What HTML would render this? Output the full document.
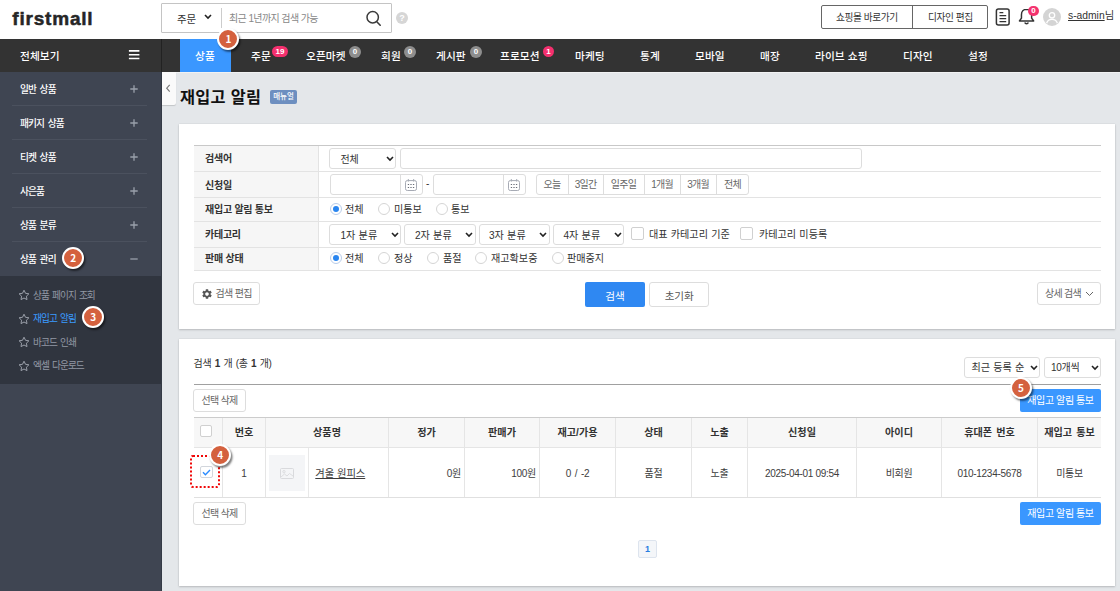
<!DOCTYPE html>
<html lang="ko">
<head>
<meta charset="utf-8">
<title>재입고 알림</title>
<style>
*{box-sizing:border-box;margin:0;padding:0}
html,body{width:1120px;height:591px;overflow:hidden;background:#e4e7ea}
body{position:relative;font-family:"Liberation Sans","Noto Sans CJK KR",sans-serif;font-size:10px;color:#333;line-height:1}
.a{position:absolute}
.t{position:absolute;white-space:nowrap;line-height:14px;height:14px;letter-spacing:-.250px}
.b{font-weight:700}
.c{text-align:center}
/* header */
#hd{left:0;top:0;width:1120px;height:39px;background:#fff}
#nav{left:0;top:39px;width:1120px;height:33px;background:#333}
#side{left:0;top:72px;width:161px;height:519px;background:#3f4552}
#sub{left:0;top:276px;width:161px;height:108px;background:#30353f}
.sl{position:absolute;left:12px;width:135px;height:1px;background:#4b515e}
.sm{color:#fff;font-size:9.700px;font-weight:500;margin-top:.500px;left:20px;letter-spacing:-.850px;word-spacing:1.600px}
.pl{position:absolute;left:130px;width:7px;height:7px;margin-top:1px}
.pl:before{content:"";position:absolute;left:0;top:3px;width:7px;height:1px;background:#8d929c}
.pl:after{content:"";position:absolute;left:3px;top:0;width:1px;height:7px;background:#8d929c}
.ss{color:#9298a4;font-size:9.700px;left:33px;letter-spacing:-.950px;word-spacing:1.300px}
.nv{color:#fff;font-size:10.700px;font-weight:500;top:48px;line-height:16px;height:16px;letter-spacing:.100px}
.bd{position:absolute;height:11px;border-radius:6px;color:#fff;font-size:8px;font-weight:700;text-align:center;line-height:11px;font-family:"Liberation Sans",sans-serif}
.num{position:absolute;width:22px;height:22px;border-radius:50%;background:#d4613e;border:2px solid #fff;box-shadow:1.500px 2px 2px rgba(0,0,0,.5);color:#fff;font-size:10px;font-weight:700;text-align:center;line-height:17.500px;font-family:"Noto Sans CJK KR",sans-serif}

.pn{position:absolute;left:179px;width:936px;background:#fff;box-shadow:0 1px 2px rgba(0,0,0,.18),0 0 1.500px rgba(0,0,0,.1)}
.rl{position:absolute;left:194px;width:907px;height:1px;background:#e3e3e3}
.lb{left:205px;font-weight:700;color:#333}
.bx{position:absolute;background:#fff;border:1px solid #ddd;border-radius:3px}
.cv{position:absolute}
.g{color:#666;letter-spacing:-.750px}
.f{font-size:10.100px;letter-spacing:0;word-spacing:.400px}
.rd{position:absolute;width:12px;height:12px;border-radius:50%;border:1px solid #d5d5d5;background:#fff}
.rd.on{border-color:#b9cdea}
.rd.on:after{content:"";position:absolute;left:2px;top:2px;width:6px;height:6px;border-radius:50%;background:#2a86f0}
.ck{position:absolute;width:12px;height:12px;border:1px solid #d0d0d0;border-radius:2px;background:#fff}
.vl{position:absolute;top:418px;width:1px;height:79px;background:#e5e5e5}
.th{top:426px;font-weight:700;text-align:center;color:#333;font-size:10.100px;letter-spacing:0;word-spacing:1.200px}
.td{top:467px;color:#3d3d3d;letter-spacing:-.300px}
</style>
</head>
<body>
<!-- ===== header ===== -->
<div id="hd" class="a"></div>
<div class="t" style="left:12.300px;top:6px;font-size:19px;line-height:26px;height:26px;font-weight:700;color:#262626;-webkit-text-stroke:.500px #262626;letter-spacing:.800px;font-family:'Liberation Sans',sans-serif">firstmall</div>
<div class="a" style="left:161px;top:3px;width:231px;height:30px;border:1px solid #c4c4c4;border-radius:1px;background:#fff"></div>
<div class="a" style="left:221px;top:8px;width:1px;height:20px;background:#ccc"></div>
<div class="t" style="left:177px;top:11.500px;font-size:10.500px;color:#333">주문</div>
<svg class="a" style="left:204px;top:14px" width="8" height="6" viewBox="0 0 8 6"><path d="M1 1l3 3 3-3" fill="none" stroke="#222" stroke-width="1.6"/></svg>
<div class="t" style="left:229px;top:11.500px;font-size:10px;letter-spacing:-.600px;color:#888">최근 1년까지 검색 가능</div>
<svg class="a" style="left:365px;top:10px" width="18" height="18" viewBox="0 0 18 18"><circle cx="7.700" cy="7.300" r="5.700" fill="none" stroke="#3a3a3a" stroke-width="1.500"/><path d="M11.800 11.800l3.400 3.400" stroke="#3a3a3a" stroke-width="1.600" stroke-linecap="round"/></svg>
<div class="a c" style="left:396px;top:12px;width:12px;height:12px;border-radius:50%;background:#d6d6d6;color:#fff;font-size:9px;line-height:12px;font-weight:700;font-family:'Liberation Sans',sans-serif">?</div>

<div class="a" style="left:821px;top:5px;width:167px;height:24px;border:1px solid #666;border-radius:2px;background:#fff"></div>
<div class="a" style="left:912px;top:5px;width:1px;height:24px;background:#666"></div>
<div class="t" style="left:836px;top:11.300px;font-size:9.700px;letter-spacing:-.400px;color:#333">쇼핑몰 바로가기</div>
<div class="t" style="left:928px;top:11.300px;font-size:9.700px;letter-spacing:-.400px;color:#333">디자인 편집</div>
<svg class="a" style="left:994px;top:8px" width="17" height="18" viewBox="0 0 17 18"><rect x="2.400" y="1.100" width="12.700" height="15.900" rx="2" fill="none" stroke="#333" stroke-width="1.500"/><path d="M5.500 4.600h3.800M5.500 7.600h6.700M5.500 10.600h6.700M5.500 13.600h6.700" stroke="#333" stroke-width="1.300"/></svg>
<svg class="a" style="left:1017.200px;top:7.300px" width="19.100" height="19.100" viewBox="0 0 18 18"><path d="M9 2.2c-3 0-4.8 2.2-4.8 5v3.3L2.3 13.2h13.4l-1.9-2.7V7.2c0-2.8-1.8-5-4.8-5z" fill="none" stroke="#333" stroke-width="1.4" stroke-linejoin="round"/><path d="M7.3 14.6a1.8 1.8 0 0 0 3.4 0" fill="none" stroke="#333" stroke-width="1.3"/></svg>
<div class="bd" style="left:1028.300px;top:5.800px;width:10.500px;height:10.500px;line-height:10.500px;background:#f4336f">0</div>
<svg class="a" style="left:1043px;top:8px" width="18" height="18" viewBox="0 0 18 18"><circle cx="9" cy="9" r="9" fill="#d4d4d4"/><circle cx="9" cy="7.3" r="2.7" fill="none" stroke="#fff" stroke-width="1.3"/><path d="M3.6 15.2c.8-2.6 2.9-3.8 5.4-3.8s4.600 1.200 5.400 3.800" fill="none" stroke="#fff" stroke-width="1.3"/></svg>
<div class="t" style="left:1068px;top:9px;font-size:10.300px;letter-spacing:0;color:#333"><span style="text-decoration:underline">s-admin</span>님</div>

<!-- ===== nav ===== -->
<div id="nav" class="a"></div>
<div class="a" style="left:161px;top:39px;width:1px;height:33px;background:#222"></div>
<div class="a" style="left:180px;top:39px;width:51px;height:33px;background:#3a97ff"></div>
<div class="t nv" style="left:20px">전체보기</div>
<svg class="a" style="left:128px;top:48px" width="12" height="13" viewBox="0 0 12 13"><path d="M.900 2.900h10.500M.900 6.700h10.500M.900 10.500h10.500" stroke="#fff" stroke-width="1.600"/></svg>
<div class="t nv" style="left:195px">상품</div>
<div class="t nv" style="left:251px">주문</div>
<div class="bd" style="left:272px;top:46px;width:16px;background:#f4306e">19</div>
<div class="t nv" style="left:306px">오픈마켓</div>
<div class="bd" style="left:349px;top:46px;width:12px;height:12px;line-height:12px;background:#8e8e8e">0</div>
<div class="t nv" style="left:381px">회원</div>
<div class="bd" style="left:404px;top:46px;width:12px;height:12px;line-height:12px;background:#8e8e8e">0</div>
<div class="t nv" style="left:436px">게시판</div>
<div class="bd" style="left:470px;top:46px;width:12px;height:12px;line-height:12px;background:#8e8e8e">0</div>
<div class="t nv" style="left:500px">프로모션</div>
<div class="bd" style="left:543px;top:46px;width:11px;height:11px;background:#f4306e">1</div>
<div class="t nv" style="left:575px">마케팅</div>
<div class="t nv" style="left:640px">통계</div>
<div class="t nv" style="left:695px">모바일</div>
<div class="t nv" style="left:760px">매장</div>
<div class="t nv" style="left:815px">라이브 쇼핑</div>
<div class="t nv" style="left:903px">디자인</div>
<div class="t nv" style="left:968px">설정</div>

<!-- ===== sidebar ===== -->
<div id="side" class="a"></div>
<div id="sub" class="a"></div>
<div class="t sm" style="top:82px">일반 상품</div><svg class="a" style="left:129.700px;top:85px" width="8" height="8" viewBox="0 0 8 8"><path d="M.300 4h7.400M4 .300v7.400" stroke="#9aa0ab" stroke-width="1.300"/></svg><div class="sl" style="top:105px"></div>
<div class="t sm" style="top:116px">패키지 상품</div><svg class="a" style="left:129.700px;top:119px" width="8" height="8" viewBox="0 0 8 8"><path d="M.300 4h7.400M4 .300v7.400" stroke="#9aa0ab" stroke-width="1.300"/></svg><div class="sl" style="top:139px"></div>
<div class="t sm" style="top:150px">티켓 상품</div><svg class="a" style="left:129.700px;top:153px" width="8" height="8" viewBox="0 0 8 8"><path d="M.300 4h7.400M4 .300v7.400" stroke="#9aa0ab" stroke-width="1.300"/></svg><div class="sl" style="top:173px"></div>
<div class="t sm" style="top:184px">사은품</div><svg class="a" style="left:129.700px;top:187px" width="8" height="8" viewBox="0 0 8 8"><path d="M.300 4h7.400M4 .300v7.400" stroke="#9aa0ab" stroke-width="1.300"/></svg><div class="sl" style="top:207px"></div>
<div class="t sm" style="top:218px">상품 분류</div><svg class="a" style="left:129.700px;top:221px" width="8" height="8" viewBox="0 0 8 8"><path d="M.300 4h7.400M4 .300v7.400" stroke="#9aa0ab" stroke-width="1.300"/></svg><div class="sl" style="top:241px"></div>
<div class="t sm" style="top:252px">상품 관리</div><svg class="a" style="left:129.700px;top:255.200px" width="8" height="8" viewBox="0 0 8 8"><path d="M.300 4h7.400" stroke="#9aa0ab" stroke-width="1.300"/></svg>
<div class="t ss" style="top:288.700px">상품 페이지 조회</div>
<div class="t ss" style="top:312px;color:#3a9bff">재입고 알림</div>
<div class="t ss" style="top:335.600px">바코드 인쇄</div>
<div class="t ss" style="top:359px">엑셀 다운로드</div>
<svg class="a" style="left:18px;top:289px" width="12" height="12" viewBox="0 0 12 12"><path d="M6 1.200l1.500 3.100 3.400.500-2.500 2.400.600 3.400L6 9l-3 1.600.600-3.400L1.100 4.800l3.400-.500z" fill="none" stroke="#9a9fa9" stroke-width="1" stroke-linejoin="round"/></svg>
<svg class="a" style="left:18px;top:312.500px" width="12" height="12" viewBox="0 0 12 12"><path d="M6 1.200l1.500 3.100 3.400.500-2.500 2.400.600 3.400L6 9l-3 1.600.600-3.400L1.100 4.800l3.400-.500z" fill="none" stroke="#9a9fa9" stroke-width="1" stroke-linejoin="round"/></svg>
<svg class="a" style="left:18px;top:336px" width="12" height="12" viewBox="0 0 12 12"><path d="M6 1.200l1.500 3.100 3.400.500-2.500 2.400.600 3.400L6 9l-3 1.600.600-3.400L1.100 4.800l3.400-.500z" fill="none" stroke="#9a9fa9" stroke-width="1" stroke-linejoin="round"/></svg>
<svg class="a" style="left:18px;top:359.500px" width="12" height="12" viewBox="0 0 12 12"><path d="M6 1.200l1.500 3.100 3.400.500-2.500 2.400.600 3.400L6 9l-3 1.600.600-3.400L1.100 4.800l3.400-.500z" fill="none" stroke="#9a9fa9" stroke-width="1" stroke-linejoin="round"/></svg>


<!-- ===== content ===== -->
<div class="a" style="left:161px;top:72px;width:1px;height:519px;background:#343a45"></div>
<div class="a" style="left:176px;top:72px;width:944px;height:1px;background:#f1f2f3"></div>
<div class="a" style="left:162px;top:72px;width:14px;height:33px;background:#fafafa;border-radius:0 0 2px 0;box-shadow:0 1px 1px rgba(0,0,0,.15)"></div>
<svg class="a" style="left:165px;top:83px" width="6" height="10" viewBox="0 0 6 10"><path d="M4.700 1.800L1.700 5.200l3 3.400" fill="none" stroke="#777" stroke-width="1.150"/></svg>
<div class="t b" style="left:180px;top:85px;font-size:16.300px;letter-spacing:.300px;line-height:24px;height:24px;color:#111">재입고 알림</div>
<div class="a c" style="left:270px;top:90px;width:27px;height:14px;border-radius:2px;background:#6d8fc0;color:#fff;font-size:7.500px;line-height:14px;font-weight:500">매뉴얼</div>

<div class="pn" style="top:124px;height:205px"></div>
<div class="pn" style="top:339px;height:247px"></div>

<!-- filter table -->
<div class="a" style="left:194px;top:145px;width:907px;height:1px;background:#c8c8c8"></div>
<div class="a" style="left:194px;top:146px;width:125px;height:124px;background:#f6f6f6"></div>
<div class="a" style="left:318px;top:146px;width:1px;height:124px;background:#e3e3e3"></div>
<div class="rl" style="top:170.500px"></div>
<div class="rl" style="top:197px"></div>
<div class="rl" style="top:221px"></div>
<div class="rl" style="top:247px"></div>
<div class="rl" style="top:270px"></div>
<div class="t lb" style="top:152px">검색어</div>
<div class="t lb" style="top:179px">신청일</div>
<div class="t lb" style="top:203px">재입고 알림 통보</div>
<div class="t lb" style="top:228px">카테고리</div>
<div class="t lb" style="top:252px">판매 상태</div>

<!-- row1 -->
<div class="bx" style="left:329px;top:148px;width:67px;height:21px"></div>
<div class="t" style="left:340.500px;top:153px">전체</div>
<svg class="cv" style="left:386px;top:155.500px" width="8" height="6" viewBox="0 0 8 6"><path d="M1 1l3 3 3-3" fill="none" stroke="#222" stroke-width="1.600"/></svg>
<div class="bx" style="left:400px;top:148px;width:461.500px;height:21px"></div>
<!-- row2 -->
<div class="bx" style="left:330px;top:174px;width:93px;height:21px"></div>
<div class="a" style="left:400px;top:175px;width:1px;height:19px;background:#ddd"></div>
<div class="bx" style="left:433px;top:174px;width:93px;height:21px"></div>
<div class="a" style="left:503px;top:175px;width:1px;height:19px;background:#ddd"></div>
<div class="t" style="left:426px;top:177px">-</div>
<svg class="a" style="left:405px;top:179px" width="12" height="12" viewBox="0 0 12 12"><rect x=".500" y="1.600" width="11" height="9.900" rx="1.800" fill="none" stroke="#a6aab4" stroke-width="1"/><path d="M3.300 0v2.600M8.700 0v2.600" stroke="#a6aab4" stroke-width="1"/><path d="M2.800 5.500h1.300M5.350 5.500h1.300M7.900 5.500h1.300M2.800 8.500h1.300M5.350 8.500h1.300M7.900 8.500h1.300" stroke="#6a6e78" stroke-width="1.200"/></svg>
<svg class="a" style="left:508.300px;top:179px" width="12" height="12" viewBox="0 0 12 12"><rect x=".500" y="1.600" width="11" height="9.900" rx="1.800" fill="none" stroke="#a6aab4" stroke-width="1"/><path d="M3.300 0v2.600M8.700 0v2.600" stroke="#a6aab4" stroke-width="1"/><path d="M2.800 5.500h1.300M5.350 5.500h1.300M7.900 5.500h1.300M2.800 8.500h1.300M5.350 8.500h1.300M7.900 8.500h1.300" stroke="#6a6e78" stroke-width="1.200"/></svg>
<div class="bx" style="left:536px;top:174px;width:213px;height:21px"></div>
<div class="a" style="left:568px;top:175px;width:1px;height:19px;background:#ddd"></div>
<div class="a" style="left:603px;top:175px;width:1px;height:19px;background:#ddd"></div>
<div class="a" style="left:644px;top:175px;width:1px;height:19px;background:#ddd"></div>
<div class="a" style="left:680px;top:175px;width:1px;height:19px;background:#ddd"></div>
<div class="a" style="left:716px;top:175px;width:1px;height:19px;background:#ddd"></div>
<div class="t c g" style="left:536px;width:32px;top:178px">오늘</div>
<div class="t c g" style="left:568px;width:35px;top:178px">3일간</div>
<div class="t c g" style="left:603px;width:41px;top:178px">일주일</div>
<div class="t c g" style="left:644px;width:36px;top:178px">1개월</div>
<div class="t c g" style="left:680px;width:36px;top:178px">3개월</div>
<div class="t c g" style="left:716px;width:33px;top:178px">전체</div>
<!-- row3 -->
<div class="rd on" style="left:330px;top:203px"></div><div class="t f" style="left:345px;top:203px">전체</div>
<div class="rd" style="left:378px;top:203px"></div><div class="t f" style="left:394px;top:203px">미통보</div>
<div class="rd" style="left:436px;top:203px"></div><div class="t f" style="left:451px;top:203px">통보</div>
<!-- row4 -->
<div class="bx" style="left:329px;top:224px;width:72px;height:21px"></div><div class="t f" style="left:340.500px;top:228.500px">1자 분류</div>
<div class="bx" style="left:404px;top:224px;width:71.500px;height:21px"></div><div class="t f" style="left:415px;top:228.500px">2자 분류</div>
<div class="bx" style="left:478.500px;top:224px;width:71px;height:21px"></div><div class="t f" style="left:489px;top:228.500px">3자 분류</div>
<div class="bx" style="left:553px;top:224px;width:71px;height:21px"></div><div class="t f" style="left:563.500px;top:228.500px">4자 분류</div>
<svg class="cv" style="left:390.500px;top:231.500px" width="8" height="6" viewBox="0 0 8 6"><path d="M1 1l3 3 3-3" fill="none" stroke="#222" stroke-width="1.600"/></svg>
<svg class="cv" style="left:464.500px;top:231.500px" width="8" height="6" viewBox="0 0 8 6"><path d="M1 1l3 3 3-3" fill="none" stroke="#222" stroke-width="1.600"/></svg>
<svg class="cv" style="left:538.500px;top:231.500px" width="8" height="6" viewBox="0 0 8 6"><path d="M1 1l3 3 3-3" fill="none" stroke="#222" stroke-width="1.600"/></svg>
<svg class="cv" style="left:613.500px;top:231.500px" width="8" height="6" viewBox="0 0 8 6"><path d="M1 1l3 3 3-3" fill="none" stroke="#222" stroke-width="1.600"/></svg>
<div class="ck" style="left:630.500px;top:227px;width:13px;height:13px"></div><div class="t f" style="left:649px;top:228px">대표 카테고리 기준</div>
<div class="ck" style="left:740px;top:227px;width:13px;height:13px"></div><div class="t f" style="left:759px;top:228px">카테고리 미등록</div>
<!-- row5 -->
<div class="rd on" style="left:330px;top:252px"></div><div class="t f" style="left:345px;top:252px">전체</div>
<div class="rd" style="left:378px;top:252px"></div><div class="t f" style="left:394px;top:252px">정상</div>
<div class="rd" style="left:427px;top:252px"></div><div class="t f" style="left:443px;top:252px">품절</div>
<div class="rd" style="left:475px;top:252px"></div><div class="t f" style="left:491px;top:252px">재고확보중</div>
<div class="rd" style="left:552px;top:252px"></div><div class="t f" style="left:567px;top:252px">판매중지</div>
<!-- buttons -->
<div class="bx" style="left:193px;top:282px;width:67px;height:23px"></div>
<svg class="a" style="left:200.500px;top:288px" width="12" height="12" viewBox="0 0 24 24"><path fill="#555" d="M19.140 12.940c.040-.300.060-.610.060-.940s-.020-.640-.070-.940l2.030-1.580a.49.49 0 0 0 .120-.610l-1.920-3.320a.488.488 0 0 0-.590-.220l-2.390.960c-.500-.380-1.030-.700-1.620-.940l-.360-2.540a.484.484 0 0 0-.480-.410h-3.840c-.240 0-.430.170-.470.410l-.360 2.540c-.590.240-1.130.570-1.620.940l-2.390-.960c-.220-.080-.470 0-.590.220L2.740 8.870c-.120.210-.080.470.120.610l2.030 1.580c-.050.300-.090.630-.090.940s.020.640.070.940l-2.030 1.580a.49.49 0 0 0-.120.610l1.920 3.320c.120.220.370.290.590.220l2.390-.960c.500.380 1.030.700 1.620.940l.360 2.540c.050.240.240.410.480.410h3.840c.240 0 .440-.170.470-.410l.360-2.540c.590-.240 1.130-.560 1.620-.940l2.390.960c.220.080.470 0 .590-.220l1.920-3.320c.120-.220.070-.470-.120-.610l-2.010-1.580zM12 15.600c-1.980 0-3.600-1.620-3.600-3.600s1.620-3.600 3.600-3.600 3.600 1.620 3.600 3.600-1.620 3.600-3.600 3.600z"/></svg>
<div class="t g" style="left:215.500px;top:287px;letter-spacing:-.650px">검색 편집</div>
<div class="a" style="left:585px;top:282px;width:60px;height:25px;background:#2f88f2;border-radius:2px"></div>
<div class="t c" style="left:585px;width:60px;top:288.500px;color:#fff;font-size:10.600px;letter-spacing:0">검색</div>
<div class="bx" style="left:649px;top:282px;width:60px;height:25px"></div>
<div class="t c g" style="left:649px;width:60.500px;top:288.500px;font-size:10.600px;letter-spacing:0;color:#555">초기화</div>
<div class="bx" style="left:1037px;top:282px;width:64px;height:23px"></div>
<div class="t g" style="left:1045px;top:287px">상세 검색</div>
<svg class="a" style="left:1085px;top:291px" width="9" height="6" viewBox="0 0 9 6"><path d="M1 1l3.500 3.500L8 1" fill="none" stroke="#666" stroke-width="1"/></svg>

<!-- list panel -->
<div class="t" style="left:193.500px;top:357px;word-spacing:.800px">검색 <b>1</b> 개 (총 <b>1</b> 개)</div>
<div class="bx" style="left:964px;top:357px;width:76px;height:21px"></div><div class="t f" style="left:971.500px;top:361px">최근 등록 순</div>
<svg class="cv" style="left:1030px;top:364.500px" width="8" height="6" viewBox="0 0 8 6"><path d="M1 1l3 3 3-3" fill="none" stroke="#222" stroke-width="1.600"/></svg>
<div class="bx" style="left:1044px;top:357px;width:57px;height:21px"></div><div class="t" style="left:1051px;top:361px">10개씩</div>
<svg class="cv" style="left:1090.500px;top:364.500px" width="8" height="6" viewBox="0 0 8 6"><path d="M1 1l3 3 3-3" fill="none" stroke="#222" stroke-width="1.600"/></svg>
<div class="a" style="left:194px;top:384px;width:907px;height:1px;background:#a0a0a0"></div>
<div class="bx" style="left:193px;top:389px;width:53px;height:23px"></div><div class="t g c" style="left:193px;width:53px;top:394px">선택 삭제</div>
<div class="a" style="left:1020px;top:389px;width:81px;height:23px;background:#3a97ff;border-radius:2px"></div><div class="t c" style="left:1020px;width:81px;top:394px;color:#fff;letter-spacing:-.400px">재입고 알림 통보</div>

<!-- table -->
<div class="a" style="left:194px;top:417px;width:907px;height:1px;background:#ccc"></div>
<div class="a" style="left:194px;top:418px;width:907px;height:29px;background:#f7f7f7"></div>
<div class="a" style="left:194px;top:447px;width:907px;height:1px;background:#e5e5e5"></div>
<div class="a" style="left:194px;top:497px;width:907px;height:1px;background:#e0e0e0"></div>
<div class="vl" style="left:222px"></div><div class="vl" style="left:265px"></div><div class="vl" style="left:388px"></div>
<div class="vl" style="left:464px"></div><div class="vl" style="left:539px"></div><div class="vl" style="left:615px"></div>
<div class="vl" style="left:691px"></div><div class="vl" style="left:747px"></div><div class="vl" style="left:856px"></div>
<div class="vl" style="left:941px"></div><div class="vl" style="left:1037px"></div>
<div class="a" style="left:308px;top:448px;width:1px;height:49px;background:#e8e8e8"></div>
<div class="ck" style="left:200px;top:425px"></div>
<div class="t th" style="left:223px;width:42px">번호</div>
<div class="t th" style="left:266px;width:122px">상품명</div>
<div class="t th" style="left:389px;width:75px">정가</div>
<div class="t th" style="left:465px;width:74px">판매가</div>
<div class="t th" style="left:540px;width:75px">재고/가용</div>
<div class="t th" style="left:616px;width:75px">상태</div>
<div class="t th" style="left:692px;width:55px">노출</div>
<div class="t th" style="left:748px;width:108px">신청일</div>
<div class="t th" style="left:857px;width:84px">아이디</div>
<div class="t th" style="left:942px;width:95px">휴대폰 번호</div>
<div class="t th" style="left:1038px;width:63px">재입고 통보</div>

<div class="a" style="left:190px;top:455px;width:30px;height:33px;border:2px dotted #f00808;border-radius:3px"></div>
<div class="ck" style="left:200px;top:465.500px;width:12.500px;height:12.500px;border-color:#d2d6dc"></div>
<svg class="a" style="left:202px;top:468.500px" width="9" height="7" viewBox="0 0 9 7"><path d="M1 3.300l2.400 2.400L8 1.100" fill="none" stroke="#2a8bff" stroke-width="1.400"/></svg>
<div class="t td c" style="left:223px;width:42px">1</div>
<div class="a" style="left:269px;top:455px;width:36px;height:36px;background:#f4f5f7"></div>
<svg class="a" style="left:280px;top:468px" width="14" height="11" viewBox="0 0 14 11"><rect x=".500" y=".500" width="13" height="10" rx="1" fill="none" stroke="#d9dadd" stroke-width="1"/><circle cx="4" cy="3.700" r="1.200" fill="none" stroke="#d9dadd" stroke-width=".900"/><path d="M1 9l3.500-3 2.500 2 2.500-2.500L13 8" fill="none" stroke="#d9dadd" stroke-width=".900"/></svg>
<div class="t td" style="left:315.300px;font-size:10.300px;letter-spacing:-.050px;text-decoration:underline">겨울 원피스</div>
<div class="t td" style="left:389px;width:72px;text-align:right">0원</div>
<div class="t td" style="left:465px;width:71px;text-align:right">100원</div>
<div class="t td c" style="left:540px;width:75px;word-spacing:1.200px">0 / -2</div>
<div class="t td c" style="left:616px;width:75px">품절</div>
<div class="t td c" style="left:692px;width:55px">노출</div>
<div class="t td c" style="left:748px;width:108px">2025-04-01 09:54</div>
<div class="t td c" style="left:857px;width:84px">비회원</div>
<div class="t td c" style="left:942px;width:95px">010-1234-5678</div>
<div class="t td c" style="left:1038px;width:63px">미통보</div>

<div class="bx" style="left:193px;top:502px;width:53px;height:23px"></div><div class="t g c" style="left:193px;width:53px;top:507px">선택 삭제</div>
<div class="a" style="left:1020px;top:502px;width:81px;height:23px;background:#3a97ff;border-radius:2px"></div><div class="t c" style="left:1020px;width:81px;top:507px;color:#fff;letter-spacing:-.400px">재입고 알림 통보</div>
<div class="a c" style="left:638px;top:540px;width:19px;height:18px;background:#f4f6f9;border:1px solid #dde4ee;border-radius:2px;color:#2a7de1;font-size:9px;font-weight:700;line-height:16px;font-family:'Liberation Sans',sans-serif">1</div>


<!-- ===== annotation circles ===== -->
<div class="num" style="left:217.400px;top:28.400px">1</div>
<div class="num" style="left:62.100px;top:247.300px">2</div>
<div class="num" style="left:82.200px;top:306px">3</div>
<div class="num" style="left:209.100px;top:444.300px">4</div>
<div class="num" style="left:1010px;top:377.300px">5</div>
</body>
</html>
